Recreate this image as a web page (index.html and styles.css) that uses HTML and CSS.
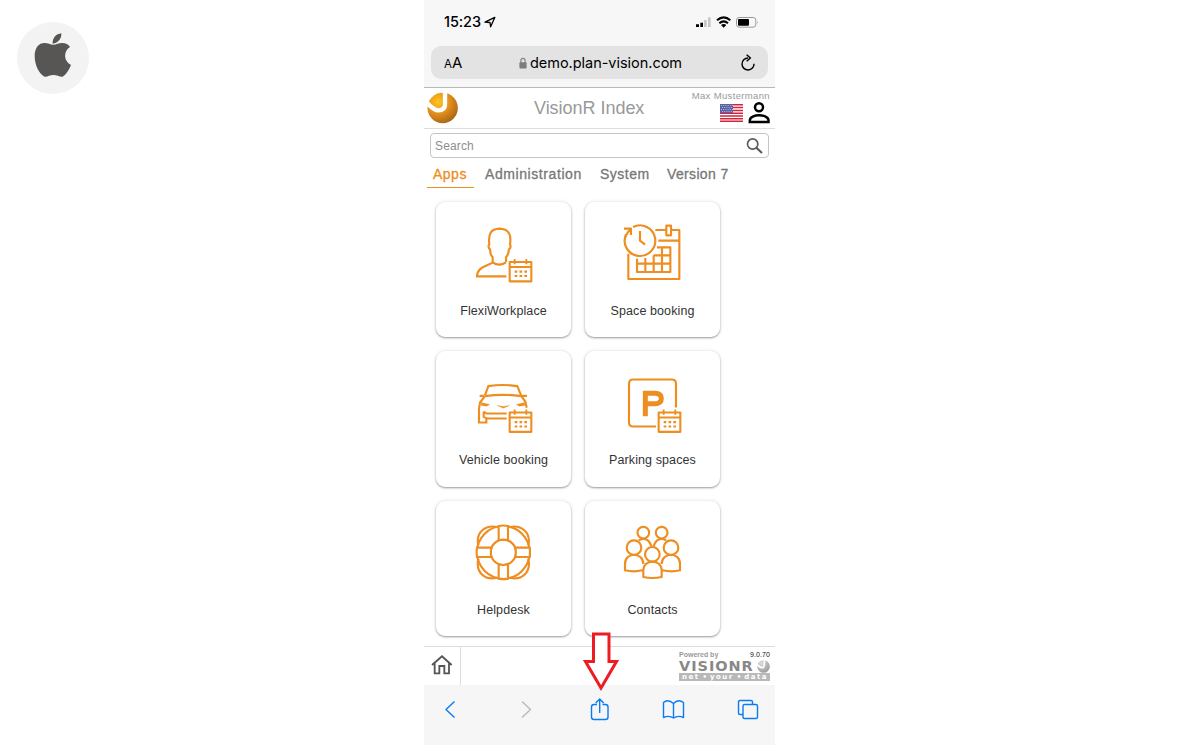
FILE: index.html
```html
<!DOCTYPE html>
<html lang="en">
<head>
<meta charset="utf-8">
<title>VisionR Index</title>
<link rel="stylesheet" href="styles.css">
</head>
<body>
<svg class="defs" width="0" height="0">
  <defs>
    <g id="cal"><path d="M239 201H304V259H239ZM239 216H304" stroke-width="6.300" stroke-linejoin="round"/><path d="M254 192V208M289 192V208" stroke-width="5.500"/><path d="M254 230H291M254 243H291" stroke-width="6.500" stroke-dasharray="8 6.500"/></g>
    <radialGradient id="ball" cx=".35" cy=".3" r=".75"><stop offset="0" stop-color="#ffc51f"/><stop offset=".5" stop-color="#e4921e"/><stop offset="1" stop-color="#a86416"/></radialGradient>
    <radialGradient id="grayball" cx=".35" cy=".25" r=".8"><stop offset="0" stop-color="#ddd"/><stop offset="1" stop-color="#999"/></radialGradient>
  </defs>
</svg>
<div class="page">
  <aside class="platform">
    <svg width="72" height="72" viewBox="51 66 216 216"><path fill="#575654" d="M158 131C157 114 168 102 184 100C185 115 176 129 158 131ZM160 134C170 134 175 129 187 129C197 129 204 132 210 141C190 154 190 183 213 195C207 211 198 224 188 230C178 231 172 225 160 225C149 225 143 231 134 230C118 224 104 195 104 168C104 143 117 129 133 129C145 129 150 134 160 134Z"/></svg>
  </aside>
  <main class="phone">
    <section class="safari-top">
      <div class="status">
        <span class="clock">15:23</span>
        <svg class="loc" width="12" height="12" viewBox="0 0 12 12"><path d="M1 6.200L10.800 1.400L6.600 10.800L6 6.500Z" fill="none" stroke="#000" stroke-width="1.300" stroke-linejoin="round"/></svg>
        <svg class="signals" width="64" height="14" viewBox="285 45 192 42">
          <path d="M288 73h9v8h-9zM301 68h8v13h-8z" fill="#000"/><path d="M312 60h8v21h-8zM324 52h8v29h-8z" fill="#c8c8c8"/>
          <g fill="none" stroke="#000" stroke-width="6"><path d="M351 61Q371 43 391 61"/><path d="M358 70Q371 58 384 70"/></g><path d="M363 75Q371 69 379 75L371 83Z"/>
          <rect x="409.500" y="52.500" width="58" height="29" rx="8" fill="none" stroke="#999" stroke-width="3"/><rect x="414" y="57" width="33" height="20" rx="3"/><path d="M471 62q4 5 0 10z" fill="#999"/>
        </svg>
      </div>
      <div class="urlbar">
        <span class="aa"><small>A</small>A</span>
        <span class="address"><svg width="8" height="12" viewBox="0 0 8 12"><path d="M1.900 6V3.400a2.100 2.100 0 0 1 4.200 0V6" fill="none" stroke="#858587" stroke-width="1.200"/><rect x=".4" y="5.200" width="7.200" height="6.300" rx="1" fill="#7d7d80"/></svg><b>demo.plan-vision.com</b></span>
        <svg width="18" height="18" viewBox="417 159 54 54"><g fill="none" stroke="#000" stroke-width="4.300"><path d="M444 171A18 18 0 1 0 462 188"/><path d="M440 161L451 171L440 181"/></g></svg>
      </div>
    </section>
    <header class="head">
      <svg class="logo" width="32" height="33" viewBox="22 273 96 99"><circle cx="69" cy="324" r="45.500" fill="url(#ball)"/><path d="M20 306Q42 331 56 331Q76 331 76 313V268" fill="none" stroke="#fff" stroke-width="13"/></svg>
      <h1>VisionR Index</h1>
      <div class="user">
        <span>Max Mustermann</span>
        <div class="user-icons">
          <svg width="23" height="18" viewBox="0 0 23 18"><path fill="#fff" d="M0 0h23v18H0z"/><path d="M0 .8H23M0 3.600H23M0 6.400H23M0 9.200H23M0 12H23M0 14.800H23M0 17.300H23" stroke="#d5213a" stroke-width="1.500"/><path fill="#5962a6" d="M0 0h13v9H0z"/><path d="M1 1.500H13M2 3.500H13M1 5.500H13M2 7.500H13" stroke="#c9cce6" stroke-width=".8" stroke-dasharray="1 1.200"/></svg>
          <svg width="22" height="22" viewBox="445 305 66 66"><circle cx="478" cy="321" r="12" fill="none" stroke="#000" stroke-width="7.500"/><path d="M450.500 365V360C450.500 340 506.500 340 506.500 360V365Z" fill="none" stroke="#000" stroke-width="7.500"/></svg>
        </div>
      </div>
    </header>
    <div class="search"><span>Search</span>
      <svg width="18" height="18" viewBox="979 33 54 54"><circle cx="999" cy="54" r="15.500" fill="none" stroke="#5b5b5b" stroke-width="5"/><path d="M1010 65L1027 81" stroke="#5b5b5b" stroke-width="6.500"/></svg>
    </div>
    <nav class="tabs"><a class="active">Apps</a><a class="t2">Administration</a><a class="t3">System</a><a class="t4">Version 7</a></nav>
    <section class="grid">
      <article class="card">
        <svg viewBox="132 84 180 180"><path d="M229 244H141C142 216 169 214 188 203V187C181 181 181 170 180 163C174 158 175 151 178 148C174 116 183 102 208 101C235 102 245 117 240 148C243 154 241 160 237 163C236 173 234 181 228 187V201M188 202Q207 216 228 202"/><use href="#cal"/></svg>
        <p>FlexiWorkplace</p>
      </article>
      <article class="card">
        <svg viewBox="135 84 180 180"><path stroke-linejoin="round" d="M151 176V252H304V105H280M232 105H264M241 137H304M265 92H279V121H265ZM165 96A46 46 0 1 1 144 118M138 101H159V120M159 101Q141 119 140 136M186 108V137L201 149M237 157H277V231H177V191M177 206H277M227 181H277M202 189V231M227 181V231M252 157V231"/></svg>
        <p>Space booking</p>
      </article>
      <article class="card">
        <svg viewBox="132 82.500 180 180"><path d="M149 151H163M276 151H291M165 149L175 122Q218 115 262 122L273 149M165 152Q218 144 274 152L286 168L290 187M165 152L150 171L147 190V231H169V220M161 198L169 204H230M161 198V214L171 219H230"/><path d="M154 171L179 177L170 182L154 180ZM284 171L259 177L268 182L284 180ZM202 180L220 183L238 180L220 188Z" fill="#ee8d20" stroke-width="1"/><use href="#cal"/></svg>
        <p>Vehicle booking</p>
      </article>
      <article class="card">
        <svg viewBox="135 82.500 180 180"><path d="M234 243H166Q153 243 153 230V115Q153 102 166 102H281Q294 102 294 115V186"/><path d="M202 212V143H230Q250 143 250 159T230 175H202" stroke-width="15"/><use href="#cal" x="3"/></svg>
        <p>Parking spaces</p>
      </article>
      <article class="card">
        <svg viewBox="132 81 180 180"><circle cx="220" cy="172" r="79"/><circle cx="220" cy="172" r="38"/><path d="M201 96C167 89 136 111 145 151M239 96C273 89 304 111 295 151M145 192C136 232 164 257 201 248M239 248C276 257 304 232 295 192"/><path fill="#fff" d="M206 93Q220 90 234 93V136Q220 132 206 136ZM206 208Q220 212 234 208V251Q220 254 206 251ZM141 158H184Q181 172 184 186H141Q139 172 141 158ZM256 158H299Q301 172 299 186H256Q259 172 256 158Z"/></svg>
        <p>Helpdesk</p>
      </article>
      <article class="card">
        <svg viewBox="135 81 180 180"><circle cx="196" cy="113" r="17.500"/><circle cx="251" cy="113" r="17.500"/><circle cx="168" cy="158" r="22"/><circle cx="279" cy="158" r="22"/><circle cx="223" cy="178" r="22"/><path d="M182 136Q211 123 220 154M227 154Q236 123 265 136M193 226Q167 232 141 226V207C141 170 195 170 196 207M251 207C252 170 306 170 306 207V226Q280 232 254 226M196 246V226C196 191 251 191 251 226V246Q223 252 196 246Z"/></svg>
        <p>Contacts</p>
      </article>
    </section>
    <footer class="foot">
      <div class="home"><svg width="22" height="20" viewBox="33 90 66 60"><path d="M36 120L66 94L95 120M44 115V145H58V123H73V145H87V115" fill="none" stroke="#555" stroke-width="5.500"/></svg></div>
      <div class="powered">
        <div class="prow"><span>Powered by</span><em>9.0.70</em></div>
        <div class="brand"><strong>VISIONR</strong><svg width="13" height="13" viewBox="0 0 12 12"><circle cx="6" cy="6" r="5.800" fill="url(#grayball)"/><path d="M0 4Q3 7.500 5.500 7Q7 6.500 6.800 0" fill="none" stroke="#fff" stroke-width="1.600"/></svg></div>
        <div class="strap">net<i>•</i>your<i>•</i>data</div>
      </div>
    </footer>
    <section class="toolbar">
      <svg viewBox="0 0 351 60" width="351" height="60"><g fill="none" stroke="#087bf5" stroke-width="1.400" stroke-linejoin="round"><path d="M30.500 16.500L22 24.500L30.500 32.500"/><path d="M98 16.500L106.500 24.500L98 32.500" stroke="#b9b9bb"/><path d="M173 19.500H170Q167.500 19.500 167.500 22V32Q167.500 34.500 170 34.500H181.500Q184 34.500 184 32V22Q184 19.500 181.500 19.500H178.500M175.700 28V14M171.700 18L175.700 14L179.700 18"/><path d="M249.500 18.500Q244 13.500 239.500 17.500V32.500Q245 30 249.500 33Q254 30 259.500 32.500V17.500Q254 13.500 249.500 18.500ZM249.500 18.500V33"/><path d="M319 29.500H316Q314.500 29.500 314.500 28V17Q314.500 15.500 316 15.500H327Q328.500 15.500 328.500 17V19.500M320.500 19.500H332Q333.500 19.500 333.500 21V32Q333.500 33.500 332 33.500H320.500Q319 33.500 319 32V21Q319 19.500 320.500 19.500Z"/></g></svg>
    </section>
    <svg class="pointer" width="36" height="60" viewBox="0 0 36 60"><path d="M10.500 3H26V30.500H33.500L18 57L2.500 30.500H10.500Z" fill="#fff" stroke="#ed1c24" stroke-width="3"/></svg>
  </main>
</div>
</body>
</html>
```
FILE: styles.css
```css
* { box-sizing: border-box; }
body { margin: 0; background: #fff; font-family: "Liberation Sans", Arial, sans-serif; overflow: hidden; }
.defs { position: absolute; }
svg { display: block; flex: none; }
.page { display: flex; height: 745px; }
.platform { width: 424px; padding: 22px 0 0 17px; }
.platform svg { background: #f3f3f3; border-radius: 50%; }
.phone { position: relative; width: 351px; display: flex; flex-direction: column; height: 745px; white-space: nowrap; }
.safari-top { height: 88px; background: #f7f7f7; border-bottom: 1px solid #b9b9b9; padding: 14px 7px 0; }
.status { display: flex; align-items: center; height: 16px; padding-left: 13px; }
.clock { font: 500 14.5px/16px Inter, sans-serif; width: 37px; letter-spacing: -.1px; }
.loc { margin-left: 3px; }
.signals { margin-left: 199px; }
.urlbar { margin-top: 16px; height: 33px; background: #e3e3e4; border-radius: 10px; display: flex; align-items: center; padding: 0 11px 0 13px; font-family: Inter, sans-serif; color: #000; }
.aa { font-size: 15px; width: 75px; }
.aa small { font-size: 11.5px; }
.address { display: flex; align-items: center; gap: 3px; flex: 1; }
.address b { font-weight: 400; font-size: 14.5px; letter-spacing: -.03px; }
.head { height: 41px; border-bottom: 1px solid #ddd; display: flex; }
.logo { margin: 3px 0 0 3px; }
.head h1 { margin: 0; padding: 9px 0 0 75px; width: 234px; font-weight: 400; font-size: 18px; line-height: 22px; letter-spacing: -.03px; color: #999; }
.user { width: 78px; display: flex; flex-direction: column; align-items: flex-end; color: #999; font-size: 9.5px; line-height: 11px; padding: 2px 1px 0 0; letter-spacing: .35px; }
.user-icons { display: flex; align-items: center; gap: 5px; margin-top: 1px; }
.search { margin: 4px 6px 0; height: 25px; flex: none; border: 1px solid #c4c4c4; border-radius: 4px; display: flex; align-items: center; justify-content: space-between; padding: 0 4px; color: #8e8e8e; font-size: 12px; letter-spacing: .15px; }
.tabs { display: flex; height: 30px; padding-left: 3px; font-size: 14px; font-weight: 400; -webkit-text-stroke: .3px currentColor; color: #777; line-height: 33px; flex: none; }
.tabs a { height: 30px; padding-left: 6px; }
.tabs .active { width: 47px; color: #ee8d20; border-bottom: 1px solid #ee8d20; letter-spacing: .5px; }
.tabs .t2 { margin-left: 5px; width: 115px; letter-spacing: .58px; }
.tabs .t3 { width: 67px; letter-spacing: .5px; }
.tabs .t4 { letter-spacing: .35px; }
.grid { display: grid; grid-template-columns: 135px 135px; grid-auto-rows: 135.5px; gap: 14px; padding: 13.5px 0 0 12px; height: 458px; flex: none; }
.card { border-radius: 9px; background: #fff; box-shadow: 0 1px 2px rgba(0,0,0,.36), 0 0 4px rgba(0,0,0,.1); padding-top: 21.5px; }
.card svg { width: 60px; height: 60px; margin-left: 38px; fill: none; stroke: #ee8d20; stroke-width: 6.4; }
.card p { margin: 19.5px 0 0; text-align: center; color: #333; font-size: 12.5px; line-height: 16px; letter-spacing: .1px; }
.foot { height: 39px; flex: none; border-top: 1px solid #ddd; display: flex; justify-content: space-between; }
.home { width: 37px; border-right: 1px solid #ddd; padding: 8px 0 0 7px; }
.powered { width: 91px; margin-right: 5px; padding-top: 3px; }
.prow { display: flex; justify-content: space-between; height: 9px; line-height: 9px; font-size: 7px; font-weight: bold; color: #999; }
.prow em { font-style: normal; font-weight: 400; color: #111; letter-spacing: .1px; }
.brand { display: flex; height: 14px; justify-content: space-between; align-items: center; }
.brand strong { font: bold 14.5px/14px "DejaVu Sans", sans-serif; color: #888; letter-spacing: .95px; }
.strap { height: 8px; background: #b8b8b8; color: #fff; font: bold 7px/8px "DejaVu Sans", sans-serif; letter-spacing: 1.5px; padding: 0 2px 0 3px; display: flex; justify-content: space-between; }
.strap i { font-style: normal; letter-spacing: 0; }
.toolbar { height: 60px; background: #f6f6f6; flex: none; }
.pointer { position: absolute; left: 159px; top: 631px; }
```
